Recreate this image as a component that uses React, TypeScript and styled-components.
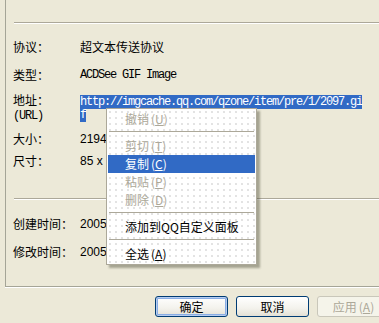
import React from "react";
import styled, {createGlobalStyle} from "styled-components";

const Global = createGlobalStyle`
  html, body {
    margin: 0;
    padding: 0;
    width: 379px;
    height: 323px;
    overflow: hidden;
    background: #ECE9D8;
  }
  body {
    font-family: "Noto Sans CJK SC", "Liberation Sans", sans-serif;
    font-size: 12px;
    color: #000;
  }
`

const Dialog = styled.div`
  position: relative;
  width: 396px;
  height: 323px;
`

const Panel = styled.div`
  margin-left: 5px;
  height: 287px;
  box-sizing: border-box;
  border-left: 1px solid #A5A597;
  border-bottom: 1px solid #A5A597;
  box-shadow: 0 1px 0 #fff;
  display: flex;
  flex-direction: column;
`

const Divider = styled.div<{$top: number}>`
  margin-top: ${p => p.$top}px;
  margin-left: 8px;
  height: 1px;
  background: #ACA899;
  border-bottom: 1px solid #fff;
`

const Row = styled.div<{$top: number}>`
  display: grid;
  grid-template-columns: 67px 1fr;
  padding-left: 7px;
  margin-top: ${p => p.$top}px;
  line-height: 14px;
  white-space: nowrap;
`

const Label = styled.div`
  white-space: pre;
`

const Mono = styled.span`
  font-family: "Liberation Mono", monospace;
  font-size: 12px;
  letter-spacing: -1.2px;
`

const Num = styled.div`
  font-family: "Liberation Sans", sans-serif;
  font-size: 12px;
`

const UrlValue = styled.div`
  font-family: "Liberation Mono", monospace;
  font-size: 12px;
  letter-spacing: -1.2px;
  padding-top: 3px;
  line-height: 13px;
  width: 284px;
  white-space: normal;
  word-break: break-all;
`

const Selected = styled.span`
  background: #316AC5;
  color: #fff;
`

const Menu = styled.div`
  position: absolute;
  left: 106px;
  top: 108px;
  width: 151px;
  box-sizing: border-box;
  padding: 1px;
  border: 1px solid #ACA899;
  background-color: #fff;
  background-image: radial-gradient(circle, #d4d4d4 0.6px, transparent 0.9px);
  background-size: 6px 6px;
  box-shadow: 3px 3px 2px rgba(80, 80, 60, 0.45);
`

const MenuItem = styled.div<{$disabled?: boolean; $active?: boolean}>`
  height: 18px;
  line-height: 18px;
  padding-left: 17px;
  white-space: nowrap;
  color: ${p => p.$active ? "#fff" : p.$disabled ? "#ACA899" : "#000"};
  background: ${p => p.$active ? "#316AC5" : "transparent"};
`

const Key = styled.span`
  text-decoration: underline;
`

const Accel = styled.span`
  margin-left: 2px;
`

const MenuSep = styled.div`
  margin: 3px 1px 5px;
  height: 1px;
  background: #ACA899;
`

const ButtonRow = styled.div`
  display: flex;
  justify-content: flex-end;
  gap: 8px;
  padding-right: 6px;
  margin-top: 9px;
`

const Btn = styled.button<{$primary?: boolean}>`
  width: 73px;
  height: 21px;
  box-sizing: border-box;
  padding: 0;
  border: 1px solid #003C74;
  border-radius: 3px;
  background: linear-gradient(180deg, #FFFFFF 0%, #F3F2EC 60%, #E3E0D5 100%);
  font-family: "Noto Sans CJK SC", sans-serif;
  font-size: 12px;
  color: #000;
  box-shadow: ${p => p.$primary ? "inset 0 0 0 1px #B7CDF0, inset 0 0 0 2px #89ADE4" : "none"};

  &:disabled {
    border-color: #C9C7BA;
    background: #F5F4EA;
    color: #ACA899;
  }
`

const menu: Array<{text?: string; key?: string; disabled?: boolean; active?: boolean; sep?: boolean}> = [
  {text: "撤销", key: "U", disabled: true},
  {sep: true},
  {text: "剪切", key: "T", disabled: true},
  {text: "复制", key: "C", active: true},
  {text: "粘贴", key: "P", disabled: true},
  {text: "删除", key: "D", disabled: true},
  {sep: true},
  {text: "添加到QQ自定义面板"},
  {sep: true},
  {text: "全选", key: "A"},
]

export default function App() {
  return <Dialog>
    <Global/>
    <Panel>
      <Divider $top={22}/>
      <Row $top={16}>
        <Label>协议：</Label>
        <div>超文本传送协议</div>
      </Row>
      <Row $top={14}>
        <Label>类型：</Label>
        <Mono>ACDSee GIF Image</Mono>
      </Row>
      <Row $top={11}>
        <Label>地址：{"\n"}<Mono>(URL)</Mono></Label>
        <UrlValue>
          <Selected>http://imgcache.qq.com/qzone/item/pre/1/2097.gif</Selected>
        </UrlValue>
      </Row>
      <Row $top={9}>
        <Label>大小：</Label>
        <Num>2194</Num>
      </Row>
      <Row $top={8}>
        <Label>尺寸：</Label>
        <Num>85 x</Num>
      </Row>
      <Divider $top={30}/>
      <Row $top={17}>
        <Label>创建时间：</Label>
        <Num>2005-</Num>
      </Row>
      <Row $top={14}>
        <Label>修改时间：</Label>
        <Num>2005-</Num>
      </Row>
    </Panel>
    <ButtonRow>
      <Btn $primary>确定</Btn>
      <Btn>取消</Btn>
      <Btn disabled>应用<Accel>(<Key>A</Key>)</Accel></Btn>
    </ButtonRow>
    <Menu>
      {menu.map((m, i) => m.sep
        ? <MenuSep key={i}/>
        : <MenuItem key={i} $disabled={m.disabled} $active={m.active}>
            {m.text}{m.key && <Accel>(<Key>{m.key}</Key>)</Accel>}
          </MenuItem>)}
    </Menu>
  </Dialog>
}
